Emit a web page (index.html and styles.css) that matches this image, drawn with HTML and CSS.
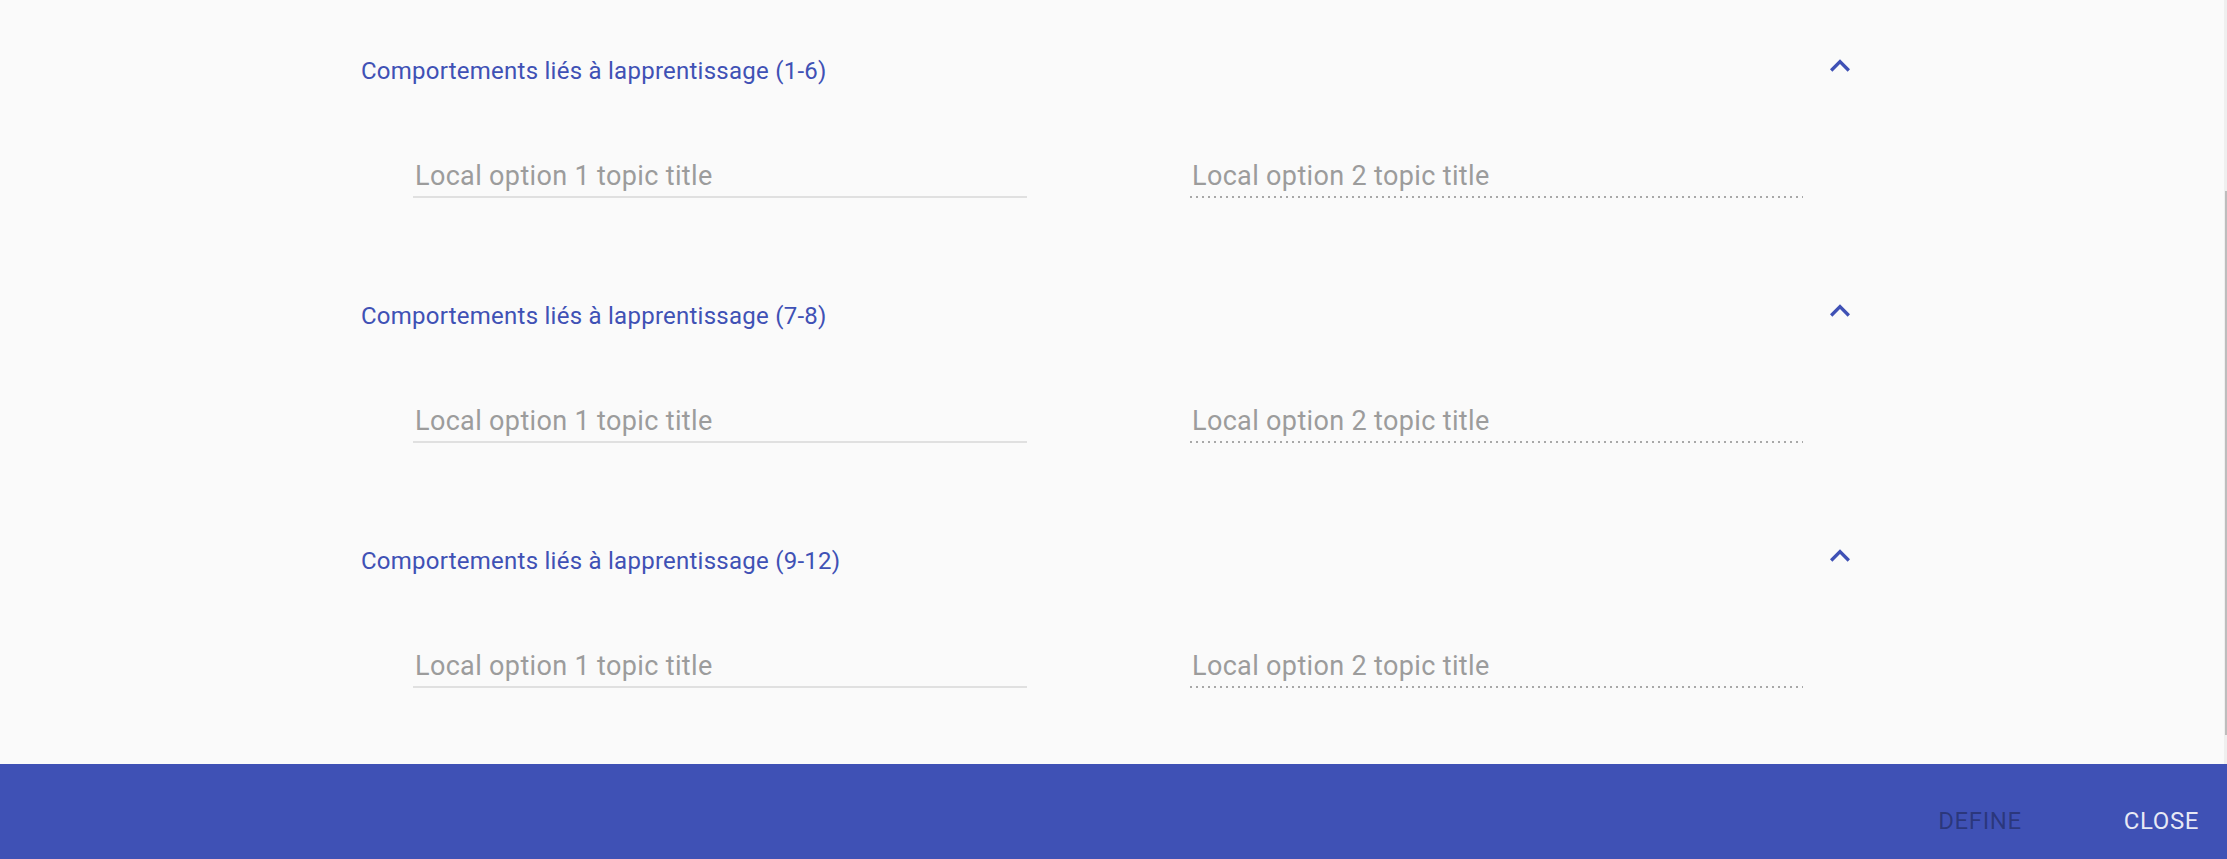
FILE: index.html
```html
<!DOCTYPE html>
<html lang="fr">
<head>
<meta charset="utf-8">
<title>Comportements liés à lapprentissage</title>
<link rel="stylesheet" href="styles.css">
</head>
<body>
<div class="dialog">
  <div class="main">
    <div class="content">
      <section class="group">
        <div class="group-head">
          <h2 class="group-title">Comportements liés à lapprentissage (1-6)</h2>
          <button class="icon-btn" aria-label="Réduire">
            <svg viewBox="0 0 24 24" width="40" height="40"><path d="M12 8l-6 6 1.41 1.41L12 10.83l4.59 4.58L18 14z"/></svg>
          </button>
        </div>
        <div class="fields">
          <input class="field" type="text" placeholder="Local option 1 topic title">
          <input class="field field-disabled" type="text" placeholder="Local option 2 topic title" disabled>
        </div>
      </section>
      <section class="group">
        <div class="group-head">
          <h2 class="group-title">Comportements liés à lapprentissage (7-8)</h2>
          <button class="icon-btn" aria-label="Réduire">
            <svg viewBox="0 0 24 24" width="40" height="40"><path d="M12 8l-6 6 1.41 1.41L12 10.83l4.59 4.58L18 14z"/></svg>
          </button>
        </div>
        <div class="fields">
          <input class="field" type="text" placeholder="Local option 1 topic title">
          <input class="field field-disabled" type="text" placeholder="Local option 2 topic title" disabled>
        </div>
      </section>
      <section class="group">
        <div class="group-head">
          <h2 class="group-title">Comportements liés à lapprentissage (9-12)</h2>
          <button class="icon-btn" aria-label="Réduire">
            <svg viewBox="0 0 24 24" width="40" height="40"><path d="M12 8l-6 6 1.41 1.41L12 10.83l4.59 4.58L18 14z"/></svg>
          </button>
        </div>
        <div class="fields">
          <input class="field" type="text" placeholder="Local option 1 topic title">
          <input class="field field-disabled" type="text" placeholder="Local option 2 topic title" disabled>
        </div>
      </section>
    </div>
    <div class="scrollbar"><div class="thumb"></div></div>
  </div>
  <footer class="actions">
    <button class="action action-disabled" disabled>Define</button>
    <button class="action">Close</button>
  </footer>
</div>
</body>
</html>
```

FILE: styles.css
```css
html, body {
  margin: 0;
  padding: 0;
  height: 100%;
}

body {
  background: #fafafa;
  font-family: Roboto, "Liberation Sans", Arial, sans-serif;
  overflow: hidden;
}

.dialog {
  display: flex;
  flex-direction: column;
  height: 859px;
}

.main {
  flex: 1;
  display: flex;
  min-height: 0;
  background: #fafafa;
}

.content {
  flex: 1;
  padding: 47px 0 0 361px;
  overflow: hidden;
}

.group {
  width: 1499px;
  margin-bottom: 94px;
}

.group-head {
  display: flex;
  align-items: flex-start;
  justify-content: space-between;
}

.group-title {
  margin: 0;
  font-size: 24px;
  font-weight: 400;
  line-height: 48px;
  letter-spacing: 0.25px;
  color: #3f51b5;
}

.icon-btn {
  width: 40px;
  height: 40px;
  padding: 0;
  margin-top: -1px;
  border: 0;
  background: transparent;
  display: flex;
}

.icon-btn svg {
  fill: #3f51b5;
}

.fields {
  display: flex;
  gap: 163px;
  margin: 58px 0 0 52px;
}

.field {
  width: 614px;
  box-sizing: border-box;
  height: 45px;
  padding: 3px 2px 0;
  margin: 0;
  border: 0;
  border-bottom: 2px solid #e0e0e0;
  background: transparent;
  font-family: Roboto, "Liberation Sans", Arial, sans-serif;
  font-size: 27px;
  line-height: 40px;
  letter-spacing: 0.35px;
  color: #333;
  outline: none;
}

.field::placeholder {
  color: #9c9c9c;
  opacity: 1;
}

.field-disabled {
  width: 613px;
  border-bottom: 0;
  padding-bottom: 2px;
  background-image: linear-gradient(to right, #a8a8a8 0%, #a8a8a8 34%, transparent 34%);
  background-size: 6px 2px;
  background-repeat: repeat-x;
  background-position: 0 bottom;
}

.scrollbar {
  width: 3px;
  background: #efefef;
}

.thumb {
  width: 2px;
  margin: 191px 0 0 1px;
  height: 544px;
  background: #bdbdbd;
}

.actions {
  height: 95px;
  box-sizing: border-box;
  background: #3f51b5;
  display: flex;
  justify-content: flex-end;
  align-items: flex-start;
  gap: 78px;
  padding: 39px 16px 0 0;
}

.action {
  border: 0;
  background: transparent;
  padding: 0 12px;
  margin: 0;
  font-family: Roboto, "Liberation Sans", Arial, sans-serif;
  font-size: 24px;
  line-height: 36px;
  letter-spacing: 0.6px;
  text-transform: uppercase;
  color: rgba(255, 255, 255, 0.88);
}

.action-disabled {
  color: rgba(0, 0, 0, 0.33);
}
```
